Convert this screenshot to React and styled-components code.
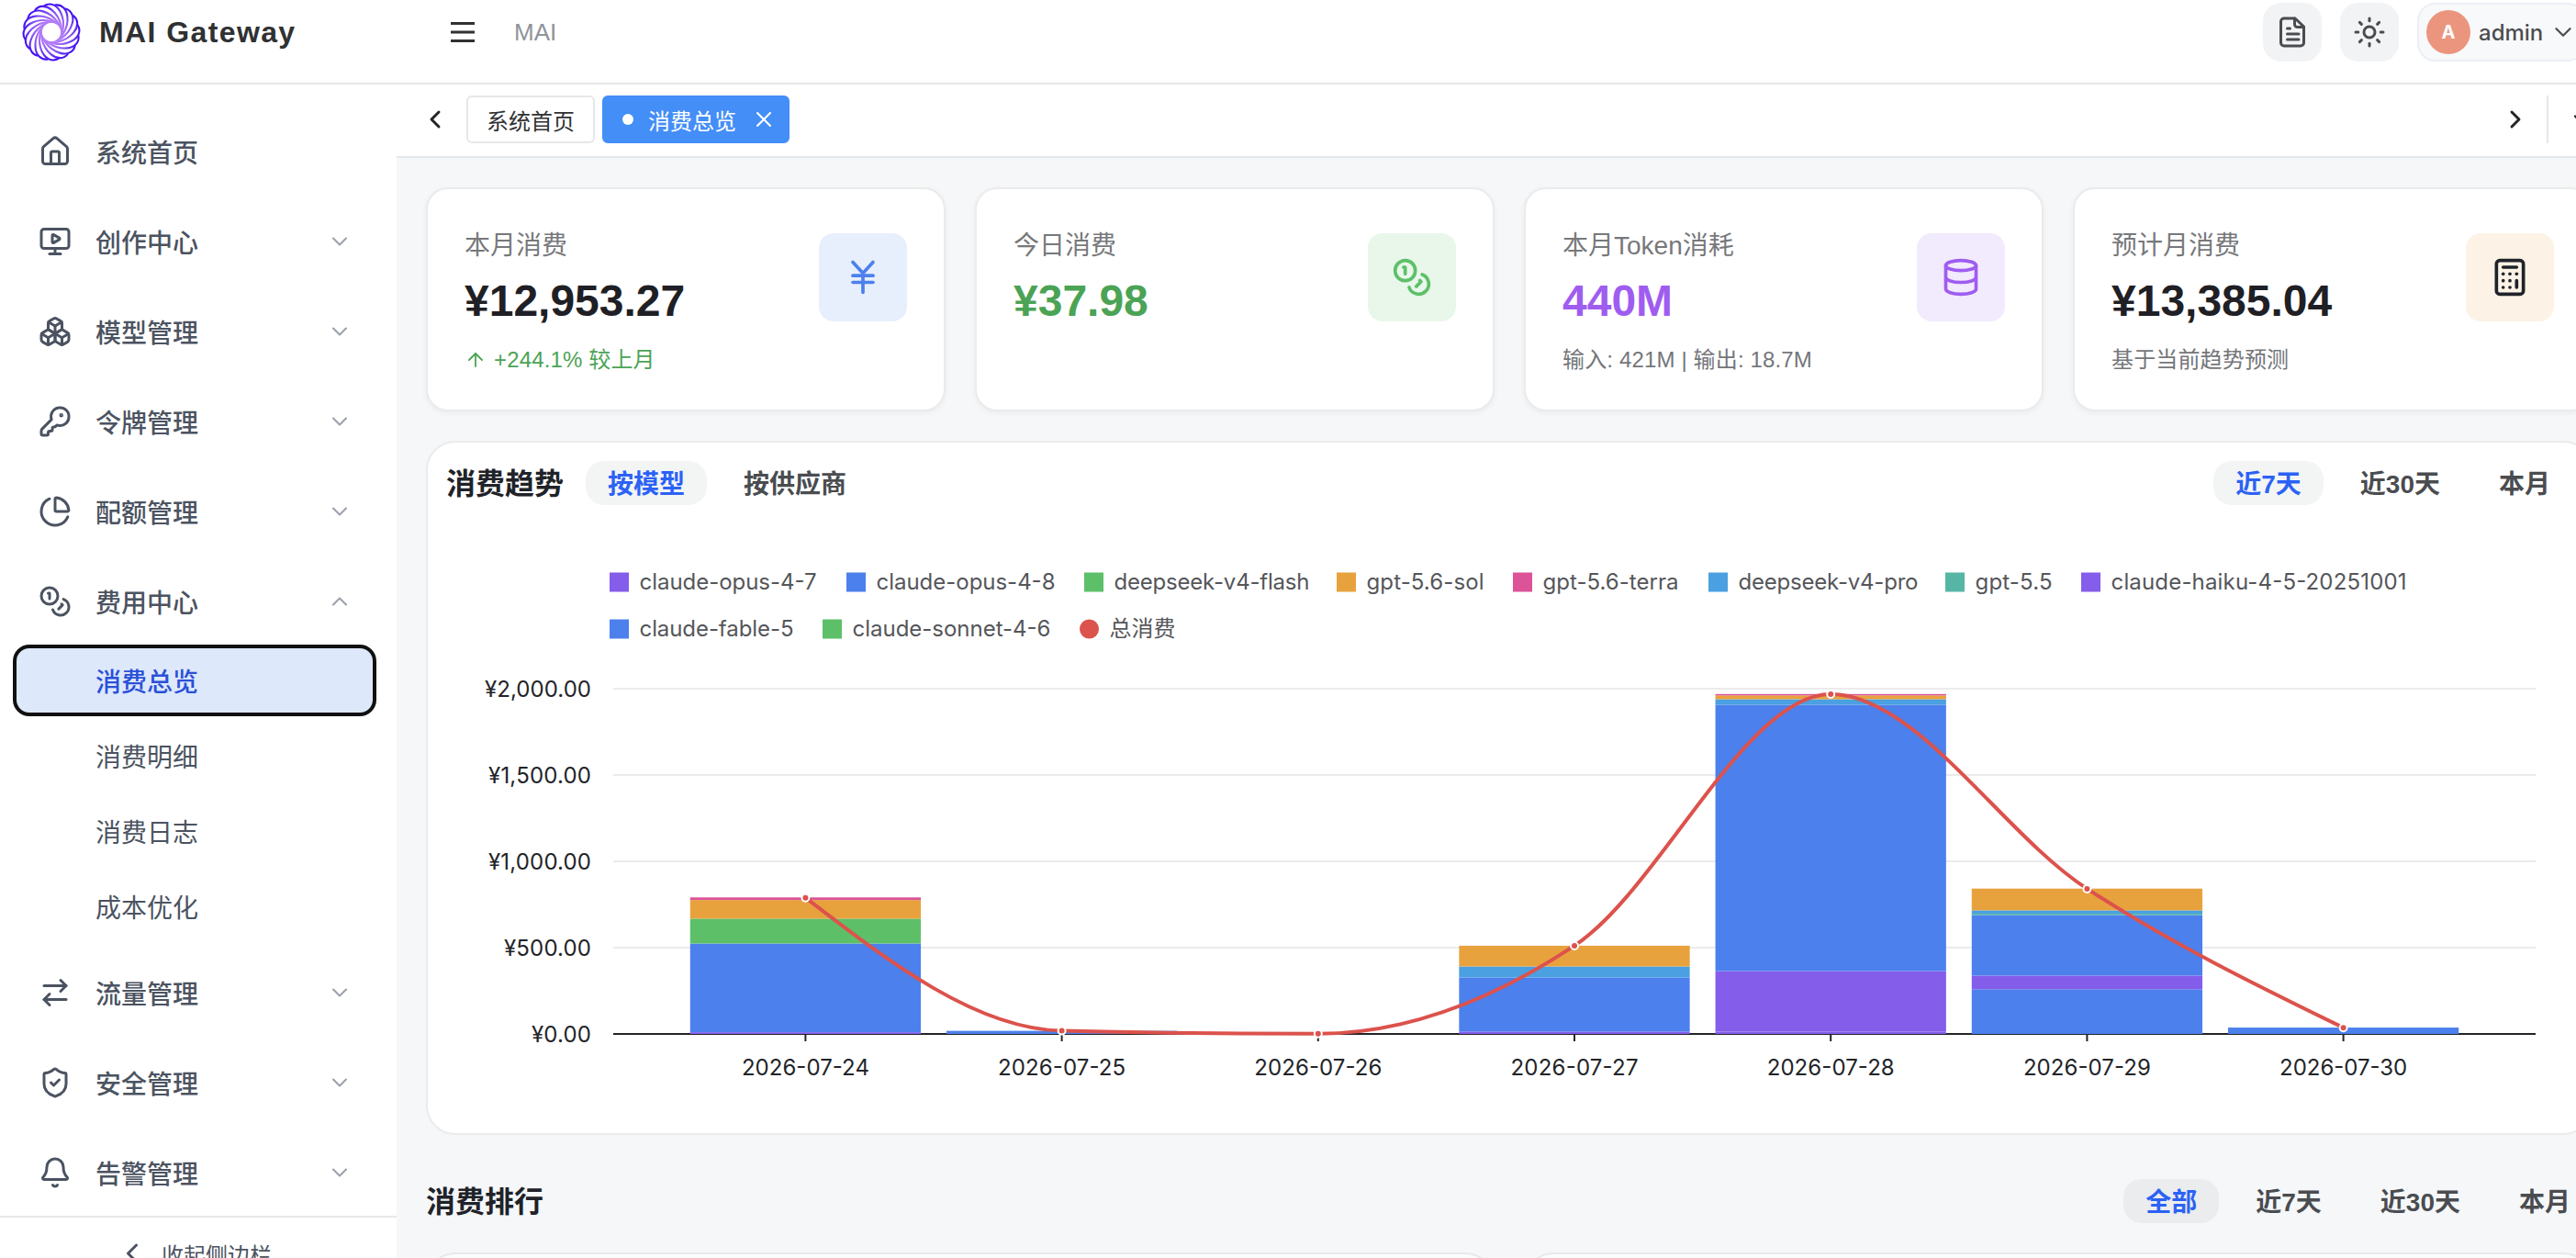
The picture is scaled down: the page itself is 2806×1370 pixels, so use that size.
import styled, { createGlobalStyle } from "styled-components";
import {
  ArrowRightLeft,
  ArrowUp,
  Bell,
  Boxes,
  Calculator,
  ChartPie,
  ChevronDown,
  ChevronLeft,
  ChevronRight,
  ChevronUp,
  Database,
  House,
  JapaneseYen,
  KeyRound,
  MonitorPlay,
  ShieldCheck,
  X,
} from "lucide-react";

const GlobalStyle = createGlobalStyle`
  * {
    box-sizing: border-box;
  }

  body {
    margin: 0;
    height: 1370px;
    overflow: hidden;
    background-color: #f5f7f9;
    color: #1f2329;
    font-family: "Liberation Sans", "Noto Sans CJK SC", sans-serif;
  }

  svg {
    flex-shrink: 0;
  }
`;

const Shell = styled.div`
  width: 2856px;
  height: 1370px;
  overflow: hidden;
`;

const Header = styled.header`
  display: flex;
  align-items: center;
  height: 92px;
  padding: 0 39px 20px 24px;
  background-color: #fff;
  border-bottom: 2px solid #e8e8e8;
`;

const Brand = styled.div`
  display: flex;
  align-items: center;
  gap: 20px;
  width: 467px;
`;

const BrandName = styled.span`
  font-size: 32px;
  font-weight: 700;
  line-height: 40px;
  letter-spacing: 1.4px;
  color: #303133;
`;

const Crumb = styled.span`
  margin-left: 43px;
  font-size: 26px;
  color: #909399;
`;

const HeaderActions = styled.div`
  display: flex;
  gap: 20px;
  margin-left: auto;
`;

const IconButton = styled.button`
  display: grid;
  place-items: center;
  width: 64px;
  height: 64px;
  padding: 0;
  border: none;
  border-radius: 20px;
  background-color: #f2f3f5;
  color: #4a4c50;
`;

const UserPill = styled.div`
  display: flex;
  align-items: center;
  width: 184px;
  height: 64px;
  padding-left: 8px;
  border: 2px solid #ebeff5;
  border-radius: 20px;
  background-color: #f8f9fb;
  font-family: Inter, sans-serif;
  font-size: 24px;
  font-weight: 500;
  color: #4c4d50;

  svg {
    margin-left: 7px;
  }
`;

const Avatar = styled.span`
  display: grid;
  place-items: center;
  width: 48px;
  height: 48px;
  margin-right: 9px;
  border-radius: 50%;
  background-color: #eb957e;
  color: #fff;
  font-size: 20px;
  font-weight: 700;
`;

const Body = styled.div`
  display: grid;
  grid-template-columns: 432px 1fr;
  height: 1278px;
`;

const Sidebar = styled.aside`
  background-color: #fff;
`;

const Menu = styled.nav`
  display: flex;
  flex-direction: column;
  gap: 8px;
  height: 1232px;
  padding: 28px 22px 0 14px;
`;

const MenuItem = styled.div`
  display: flex;
  align-items: center;
  gap: 26px;
  height: 90px;
  padding: 0 26px 0 28px;
  font-size: 28px;
  font-weight: 500;
  color: #4b5361;
`;

const MenuArrow = styled.span`
  display: flex;
  margin-left: auto;
  color: #9ba0ab;
`;

const SubMenu = styled.div`
  display: flex;
  flex-direction: column;
  gap: 4px;
  padding: 2px 0;
`;

const SubItem = styled.div`
  display: flex;
  align-items: center;
  height: 78px;
  padding-left: 86px;
  border: 4px solid ${(props) => (props.$active ? "#111" : "transparent")};
  border-radius: 18px;
  background-color: ${(props) => (props.$active ? "#dde8fb" : "transparent")};
  color: ${(props) => (props.$active ? "#2b50d8" : "#4b5361")};
  font-size: 28px;
  font-weight: ${(props) => (props.$active ? 500 : 400)};
`;

const Collapse = styled.div`
  display: flex;
  align-items: center;
  justify-content: center;
  gap: 14px;
  height: 84px;
  padding: 0 10px 4px 0;
  border-top: 2px solid #e8e8e8;
  font-size: 24px;
  color: #4b5361;
`;

const Main = styled.main`
  min-width: 0;
`;

const TabBar = styled.div`
  display: flex;
  align-items: center;
  gap: 8px;
  height: 80px;
  padding: 0 30px 2px 26px;
  background-color: #fff;
  border-bottom: 2px solid #e4e7ea;
  color: #222428;
`;

const TabScroll = styled.span`
  display: flex;
  justify-content: ${(props) => (props.$end ? "flex-end" : "flex-start")};
  width: 42px;
  margin-left: ${(props) => (props.$end ? "auto" : 0)};
`;

const Tab = styled.div`
  display: flex;
  align-items: center;
  height: 52px;
  padding: 0 20px;
  border: 2px solid ${(props) => (props.$active ? "#448ef7" : "#e6e7ea")};
  border-radius: 6px;
  background-color: ${(props) => (props.$active ? "#448ef7" : "#fff")};
  color: ${(props) => (props.$active ? "#fff" : "#303133")};
  font-size: 24px;

  svg {
    margin-left: 16px;
    margin-right: -8px;
  }
`;

const TabDot = styled.span`
  width: 12px;
  height: 12px;
  margin-right: 16px;
  border-radius: 50%;
  background-color: #fff;
`;

const Separator = styled.span`
  width: 2px;
  height: 52px;
  margin: 0 14px 0 10px;
  background-color: #e6e7ea;
`;

const Content = styled.div`
  display: flex;
  flex-direction: column;
  padding: 32px;
`;

const Stats = styled.section`
  display: grid;
  grid-template-columns: repeat(4, 1fr);
  gap: 32px;
`;

const StatCard = styled.article`
  display: flex;
  justify-content: space-between;
  height: 244px;
  padding: 40px;
  border: 2px solid #ebebec;
  border-radius: 24px;
  background-color: #fff;
  box-shadow: 0 2px 6px rgba(0, 0, 0, 0.05);
`;

const StatLabel = styled.div`
  padding-top: 2px;
  font-size: 28px;
  line-height: 40px;
  color: #77787b;
`;

const StatValue = styled.div`
  margin-top: 10px;
  font-size: 48px;
  font-weight: 700;
  line-height: 60px;
  color: ${(props) => props.$color};
`;

const StatNote = styled.div`
  display: flex;
  align-items: center;
  gap: 8px;
  margin-top: 18px;
  font-size: 24px;
  line-height: 32px;
  letter-spacing: 0.15px;
  color: ${(props) => props.$color || "#74767a"};
`;

const StatIcon = styled.div`
  display: grid;
  place-items: center;
  width: 96px;
  height: 96px;
  margin-top: 8px;
  border-radius: 16px;
  background-color: ${(props) => props.$bg};
  color: ${(props) => props.$color};
`;

const TrendPanel = styled.section`
  height: 756px;
  margin-top: 32px;
  padding: 20px;
  border: 2px solid #ebebec;
  border-radius: 32px;
  background-color: #fff;
`;

const PanelHeader = styled.div`
  display: flex;
  align-items: center;
  gap: 24px;
  height: 48px;
`;

const PanelTitle = styled.h2`
  margin: 0;
  padding-top: 3px;
  font-size: 32px;
  font-weight: 700;
  line-height: 45px;
`;

const Segments = styled.div`
  display: flex;
  gap: 16px;
  margin-left: ${(props) => (props.$end ? "auto" : 0)};
`;

const Segment = styled.button`
  height: 48px;
  padding: 3px 24px 0;
  border: none;
  border-radius: 20px;
  background-color: ${(props) => (props.$active ? props.$bg : "transparent")};
  color: ${(props) => (props.$active ? "#2b62f5" : "#4a4c50")};
  font-family: inherit;
  font-size: 28px;
  font-weight: 600;
  line-height: 45px;
`;

const Chart = styled.svg`
  display: block;
  font-family: Inter, "Noto Sans CJK SC", sans-serif;
  font-size: 24px;
`;

const RankHeader = styled(PanelHeader)`
  margin-top: 48px;
`;

const RankGrid = styled.section`
  display: grid;
  grid-template-columns: 1fr 1fr;
  gap: 32px;
  margin-top: 32px;
`;

const RankCard = styled.article`
  height: 600px;
  border: 2px solid #e8e8e9;
  border-radius: 32px;
  background-color: #fcfcfc;
`;

function Logo() {
  const strands = Array.from({ length: 16 }, (_, i) => i * 22.5);

  return (
    <svg width="64" height="64" viewBox="-32 -32 64 64" fill="none">
      <defs>
        <radialGradient
          id="swirl"
          gradientUnits="userSpaceOnUse"
          cx="0"
          cy="0"
          r="32"
        >
          <stop offset="0.38" stopColor="#b27df8" />
          <stop offset="0.68" stopColor="#8450f0" />
          <stop offset="0.95" stopColor="#4412f2" />
        </radialGradient>
      </defs>
      {strands.map((angle) => (
        <path
          key={angle}
          d="M-8 -28.500C-1 -33 6 -29 9.500 -22.500C12.500 -17 13.500 -9 12.500 -3C12 1 10.500 5 8 8.500"
          transform={`rotate(${angle})`}
          stroke="url(#swirl)"
          strokeWidth="2.1"
        />
      ))}
    </svg>
  );
}

function Coins({ size }) {
  return (
    <svg
      width={size}
      height={size}
      viewBox="0 0 24 24"
      fill="none"
      stroke="currentColor"
      strokeWidth="2"
      strokeLinecap="round"
      strokeLinejoin="round"
    >
      <circle cx="8" cy="8" r="6" />
      <path d="M18.09 10.37A6 6 0 1 1 10.34 18" />
      <path d="M7 6h1v4" />
      <path d="m16.71 13.88.7.71-2.82 2.82" />
    </svg>
  );
}

function HamburgerIcon() {
  return (
    <svg width="26" height="24" viewBox="0 0 26 24" stroke="#303133">
      <path d="M0 2.500h26M0 12h26M0 21.500h26" strokeWidth="3" />
    </svg>
  );
}

function DocIcon() {
  return (
    <svg
      width="36"
      height="36"
      viewBox="0 0 36 36"
      fill="none"
      stroke="currentColor"
      strokeWidth="3"
      strokeLinecap="round"
      strokeLinejoin="round"
    >
      <path d="M21 3H9a3.500 3.500 0 0 0-3.500 3.500v23A3.500 3.500 0 0 0 9 33h18a3.500 3.500 0 0 0 3.500-3.500V12z" />
      <path d="M20.500 3v6.500a3 3 0 0 0 3 3h7" />
      <path d="M12.500 14h3M12.500 20h12.500M12.500 26h12.500" />
    </svg>
  );
}

function SunIcon() {
  const rays = [0, 45, 90, 135, 180, 225, 270, 315];

  return (
    <svg
      width="36"
      height="36"
      viewBox="-18 -18 36 36"
      fill="none"
      stroke="currentColor"
      strokeWidth="3"
      strokeLinecap="round"
    >
      <circle r="6" />
      {rays.map((angle) => (
        <path key={angle} d="M0 -12.200V-15" transform={`rotate(${angle})`} />
      ))}
    </svg>
  );
}

const menu = [
  { label: "系统首页", Icon: House, leaf: true },
  { label: "创作中心", Icon: MonitorPlay },
  { label: "模型管理", Icon: Boxes },
  { label: "令牌管理", Icon: KeyRound },
  { label: "配额管理", Icon: ChartPie },
  {
    label: "费用中心",
    Icon: Coins,
    children: ["消费总览", "消费明细", "消费日志", "成本优化"],
  },
  { label: "流量管理", Icon: ArrowRightLeft },
  { label: "安全管理", Icon: ShieldCheck },
  { label: "告警管理", Icon: Bell },
];

const stats = [
  {
    label: "本月消费",
    value: "¥12,953.27",
    color: "#1f2025",
    note: "+244.1% 较上月",
    trend: true,
    Icon: JapaneseYen,
    iconBg: "#e7effd",
    iconColor: "#4c80ec",
  },
  {
    label: "今日消费",
    value: "¥37.98",
    color: "#4ba355",
    Icon: Coins,
    iconBg: "#e9f6ea",
    iconColor: "#5dc069",
  },
  {
    label: "本月Token消耗",
    value: "440M",
    color: "#9f5df0",
    note: "输入: 421M | 输出: 18.7M",
    Icon: Database,
    iconBg: "#f2eafd",
    iconColor: "#9f5df0",
  },
  {
    label: "预计月消费",
    value: "¥13,385.04",
    color: "#1f2025",
    note: "基于当前趋势预测",
    Icon: Calculator,
    iconBg: "#fcf3e6",
    iconColor: "#1f2329",
  },
];

const colors = {
  purple: "#845dea",
  blue: "#4c80ec",
  green: "#5dc069",
  orange: "#e8a23d",
  pink: "#dc5397",
  sky: "#4aa0e1",
  teal: "#56b6a5",
  red: "#dc524c",
};

// x and y of the marker, then the width of the label
const legend = [
  ["claude-opus-4-7", "purple", 178, 84, 193],
  ["claude-opus-4-8", "blue", 436, 84, 195],
  ["deepseek-v4-flash", "green", 695, 84, 213],
  ["gpt-5.6-sol", "orange", 970, 84, 128],
  ["gpt-5.6-terra", "pink", 1162, 84, 148],
  ["deepseek-v4-pro", "sky", 1375, 84, 196],
  ["gpt-5.5", "teal", 1633, 84, 84],
  ["claude-haiku-4-5-20251001", "purple", 1781, 84, 322],
  ["claude-fable-5", "blue", 178, 135, 168],
  ["claude-sonnet-4-6", "green", 410, 135, 216],
  ["总消费", "red", 690, 135, 72],
];

// stacked from the axis up, amounts in yuan
const days = [
  {
    date: "2026-07-24",
    total: 789,
    stack: [["purple", 10], ["blue", 514], ["green", 144], ["orange", 108], ["pink", 15]],
  },
  { date: "2026-07-25", total: 18, stack: [["blue", 18]] },
  { date: "2026-07-26", total: 1, stack: [] },
  {
    date: "2026-07-27",
    total: 511,
    stack: [["purple", 14], ["blue", 313], ["sky", 64], ["orange", 120]],
  },
  {
    date: "2026-07-28",
    total: 1968,
    stack: [["purple", 13], ["purple", 351], ["blue", 1543], ["sky", 32], ["orange", 22], ["pink", 8]],
  },
  {
    date: "2026-07-29",
    total: 841,
    stack: [["blue", 259], ["purple", 79], ["blue", 351], ["teal", 8], ["sky", 19], ["orange", 126]],
  },
  { date: "2026-07-30", total: 36, stack: [["blue", 37]] },
];

const yTicks = [
  ["¥2,000.00", 2000, 116],
  ["¥1,500.00", 1500, 112],
  ["¥1,000.00", 1000, 112],
  ["¥500.00", 500, 95],
  ["¥0.00", 0, 65],
];

const plot = { left: 182, right: 2276, bottom: 576, step: 279.2 };
const yOf = (amount) => plot.bottom - (amount * 376) / 2000;
const xOf = (index) => plot.left + plot.step * (index + 0.75);

// monotone cubic through the daily totals
function smoothPath(points) {
  const secants = points
    .slice(1)
    .map((p, i) => (p.y - points[i].y) / (p.x - points[i].x));
  const slopes = points.map((_, i) => {
    if (i === 0 || i === points.length - 1) return null;
    const a = secants[i - 1];
    const b = secants[i];
    return (
      (Math.sign(a) + Math.sign(b)) *
      Math.min(Math.abs(a), Math.abs(b), Math.abs(a + b) / 4)
    );
  });
  const last = points.length - 1;
  slopes[0] = (3 * secants[0] - slopes[1]) / 2;
  slopes[last] = (3 * secants[last - 1] - slopes[last - 1]) / 2;

  return points.reduce((path, p, i) => {
    if (i === 0) return `M${p.x} ${p.y}`;
    const prev = points[i - 1];
    const dx = (p.x - prev.x) / 3;
    return `${path}C${prev.x + dx} ${prev.y + dx * slopes[i - 1]} ${p.x - dx} ${p.y - dx * slopes[i]} ${p.x} ${p.y}`;
  }, "");
}

function Bar({ index, stack }) {
  let base = 0;

  return stack.map(([color, amount], i) => {
    const bottom = yOf(base);
    base += amount;
    return (
      <rect
        key={i}
        x={xOf(index) - 125.64}
        y={yOf(base)}
        width="251.28"
        height={bottom - yOf(base)}
        fill={colors[color]}
      />
    );
  });
}

function TrendChart() {
  const points = days.map((day, i) => ({ x: xOf(i), y: yOf(day.total) }));

  return (
    <Chart width="2316" height="664" viewBox="0 0 2316 664">
      {legend.map(([name, color, x, y, width]) => (
        <g key={name}>
          {color === "red" ? (
            <circle cx={x + 10.5} cy={y} r="10.500" fill={colors.red} />
          ) : (
            <rect
              x={x}
              y={y - 10.5}
              width="21"
              height="21"
              fill={colors[color]}
            />
          )}
          <text x={x + 32.5} y={y + 8} textLength={width} fill="#55565a">
            {name}
          </text>
        </g>
      ))}
      {yTicks.map(([label, amount, width]) => (
        <g key={label}>
          <text
            x={158 - width}
            y={yOf(amount) + 8.5}
            textLength={width}
            fill="#222428"
          >
            {label}
          </text>
          <path
            d={`M${plot.left} ${yOf(amount)}H${plot.right}`}
            stroke={amount === 0 ? "#222428" : "#ebebec"}
            strokeWidth="2"
          />
        </g>
      ))}
      {days.map((day, i) => (
        <g key={day.date}>
          <path
            d={`M${xOf(i)} ${plot.bottom}v8`}
            stroke="#222428"
            strokeWidth="2"
          />
          <text
            x={xOf(i) - 69.5}
            y={plot.bottom + 44.5}
            textLength="139"
            fill="#222428"
          >
            {day.date}
          </text>
          <Bar index={i} stack={day.stack} />
        </g>
      ))}
      <path
        d={smoothPath(points)}
        fill="none"
        stroke={colors.red}
        strokeWidth="4"
      />
      {points.map((p) => (
        <circle
          key={p.x}
          cx={p.x}
          cy={p.y}
          r="4"
          fill={colors.red}
          stroke="#fff"
          strokeWidth="2"
        />
      ))}
    </Chart>
  );
}

function SegmentGroup({ items, bg = "#f3f5f5", end }) {
  return (
    <Segments $end={end}>
      {items.map((item, i) => (
        <Segment key={item} $active={i === 0} $bg={bg}>
          {item}
        </Segment>
      ))}
    </Segments>
  );
}

function SideMenu() {
  return (
    <Sidebar>
      <Menu>
        {menu.map(({ label, Icon, leaf, children }) => (
          <div key={label}>
            <MenuItem>
              <Icon size={36} />
              {label}
              {!leaf && (
                <MenuArrow>
                  {children ? (
                    <ChevronUp size={28} strokeWidth={1.8} />
                  ) : (
                    <ChevronDown size={28} strokeWidth={1.8} />
                  )}
                </MenuArrow>
              )}
            </MenuItem>
            {children && (
              <SubMenu>
                {children.map((child, i) => (
                  <SubItem key={child} $active={i === 0}>
                    {child}
                  </SubItem>
                ))}
              </SubMenu>
            )}
          </div>
        ))}
      </Menu>
      <Collapse>
        <ChevronLeft size={36} />
        收起侧边栏
      </Collapse>
    </Sidebar>
  );
}

function App() {
  return (
    <Shell>
      <GlobalStyle />
      <Header>
        <Brand>
          <Logo />
          <BrandName>MAI Gateway</BrandName>
        </Brand>
        <HamburgerIcon />
        <Crumb>MAI</Crumb>
        <HeaderActions>
          <IconButton>
            <DocIcon />
          </IconButton>
          <IconButton>
            <SunIcon />
          </IconButton>
          <UserPill>
            <Avatar>A</Avatar>
            admin
            <ChevronDown size={30} strokeWidth={1.8} />
          </UserPill>
        </HeaderActions>
      </Header>
      <Body>
        <SideMenu />
        <Main>
          <TabBar>
            <TabScroll>
              <ChevronLeft size={32} strokeWidth={2.2} />
            </TabScroll>
            <Tab>系统首页</Tab>
            <Tab $active>
              <TabDot />
              消费总览
              <X size={28} strokeWidth={1.8} />
            </Tab>
            <TabScroll $end>
              <ChevronRight size={32} strokeWidth={2.2} />
            </TabScroll>
            <Separator />
            <ChevronDown size={28} />
          </TabBar>
          <Content>
            <Stats>
              {stats.map((stat) => (
                <StatCard key={stat.label}>
                  <div>
                    <StatLabel>{stat.label}</StatLabel>
                    <StatValue $color={stat.color}>{stat.value}</StatValue>
                    {stat.note && (
                      <StatNote $color={stat.trend && "#4ba355"}>
                        {stat.trend && <ArrowUp size={24} strokeWidth={1.8} />}
                        {stat.note}
                      </StatNote>
                    )}
                  </div>
                  <StatIcon $bg={stat.iconBg} $color={stat.iconColor}>
                    <stat.Icon size={44} />
                  </StatIcon>
                </StatCard>
              ))}
            </Stats>
            <TrendPanel>
              <PanelHeader>
                <PanelTitle>消费趋势</PanelTitle>
                <SegmentGroup items={["按模型", "按供应商"]} />
                <SegmentGroup items={["近7天", "近30天", "本月"]} end />
              </PanelHeader>
              <TrendChart />
            </TrendPanel>
            <RankHeader>
              <PanelTitle>消费排行</PanelTitle>
              <SegmentGroup
                items={["全部", "近7天", "近30天", "本月"]}
                bg="#ebecee"
                end
              />
            </RankHeader>
            <RankGrid>
              <RankCard />
              <RankCard />
            </RankGrid>
          </Content>
        </Main>
      </Body>
    </Shell>
  );
}

export default App;
